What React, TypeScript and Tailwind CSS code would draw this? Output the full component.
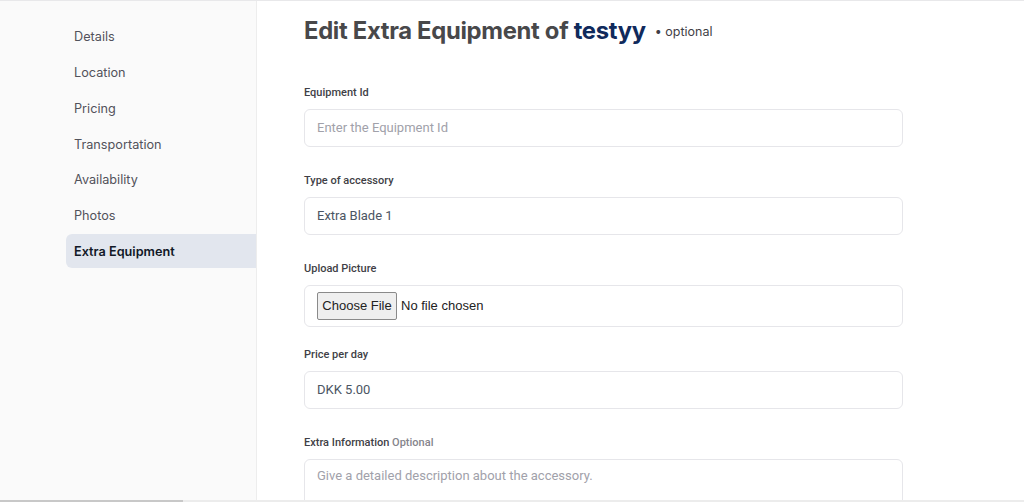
import React from "react";

const navItems = [
  "Details",
  "Location",
  "Pricing",
  "Transportation",
  "Availability",
  "Photos",
  "Extra Equipment",
];

function Field({
  label,
  optional,
  children,
  className = "",
}: {
  label: string;
  optional?: boolean;
  children: React.ReactNode;
  className?: string;
}) {
  return (
    <div className={className}>
      <p className="text-[11px] leading-[16px] font-medium text-[#3f3f46] mb-[8px]">
        {label}
        {optional && <span className="text-[#85858c]"> Optional</span>}
      </p>
      {children}
    </div>
  );
}

export default function App() {
  const active = "Extra Equipment";

  return (
    <div className="h-[502px] w-[1024px] overflow-hidden flex flex-col bg-white border-t border-[#e8e8ea] font-['Roboto',sans-serif]">
      <div className="flex flex-1 min-h-0">
        <aside className="w-[257px] shrink-0 bg-[#fafafa] border-r border-[#ededed] pt-[19px] pl-[66px] font-['Inter',sans-serif]">
          <nav className="flex flex-col">
            {navItems.map((item) => (
              <div
                key={item}
                className={`h-[34px] mb-[1.7px] flex items-center px-[8px] rounded-l-[6px] text-[12.7px] ${
                  item == active
                    ? "bg-[#e2e6ee] text-[#111827] font-semibold"
                    : "text-[#52525b]"
                }`}
              >
                {item}
              </div>
            ))}
          </nav>
        </aside>

        <main className="flex-1 pl-[47px] pt-[14px]">
          <div className="w-[599px]">
            <h1 className="flex items-center gap-[9px] h-[32px] font-['Inter',sans-serif]">
              <span className="text-[23.8px] font-bold text-[#48484a] tracking-[-0.3px]">
                Edit Extra Equipment of{" "}
                <span className="text-[#102a5c]">testyy</span>
              </span>
              <span className="text-[12.5px] text-[#3f3f46] mt-[3px]">• optional</span>
            </h1>

            <Field label="Equipment Id" className="mt-[38px]">
              <div className="h-[38px] rounded-[6px] border border-[#e6e6ea] flex items-center px-[12px] text-[13px] text-[#a1a1aa]">
                Enter the Equipment Id
              </div>
            </Field>

            <Field label="Type of accessory" className="mt-[26px]">
              <div className="h-[38px] rounded-[6px] border border-[#e6e6ea] flex items-center px-[12px] text-[13px] text-[#4b5563]">
                Extra Blade 1
              </div>
            </Field>

            <Field label="Upload Picture" className="mt-[26px]">
              <div className="h-[42px] rounded-[6px] border border-[#e6e6ea] flex items-center px-[12px] gap-[4px] font-['Liberation_Sans',sans-serif] text-[13px] text-[#222]">
                <span className="h-[28px] w-[80px] flex items-center justify-center bg-[#efefef] border border-[#8a8a8a] rounded-[2px]">
                  Choose File
                </span>
                <span>No file chosen</span>
              </div>
            </Field>

            <Field label="Price per day" className="mt-[20px]">
              <div className="h-[38px] rounded-[6px] border border-[#e6e6ea] flex items-center px-[12px] text-[13px] text-[#4b5563]">
                DKK 5.00
              </div>
            </Field>

            <Field label="Extra Information" optional className="mt-[26px]">
              <div className="mt-[1px] h-[80px] rounded-[6px] border border-[#e6e6ea] px-[12px] pt-[6px] text-[13px] text-[#a1a1aa]">
                Give a detailed description about the accessory.
              </div>
            </Field>
          </div>
        </main>
      </div>
      <div className="h-[2px] shrink-0 bg-[#ececec] flex">
        <div className="w-[183px] bg-[#c8c8c8]" />
      </div>
    </div>
  );
}
